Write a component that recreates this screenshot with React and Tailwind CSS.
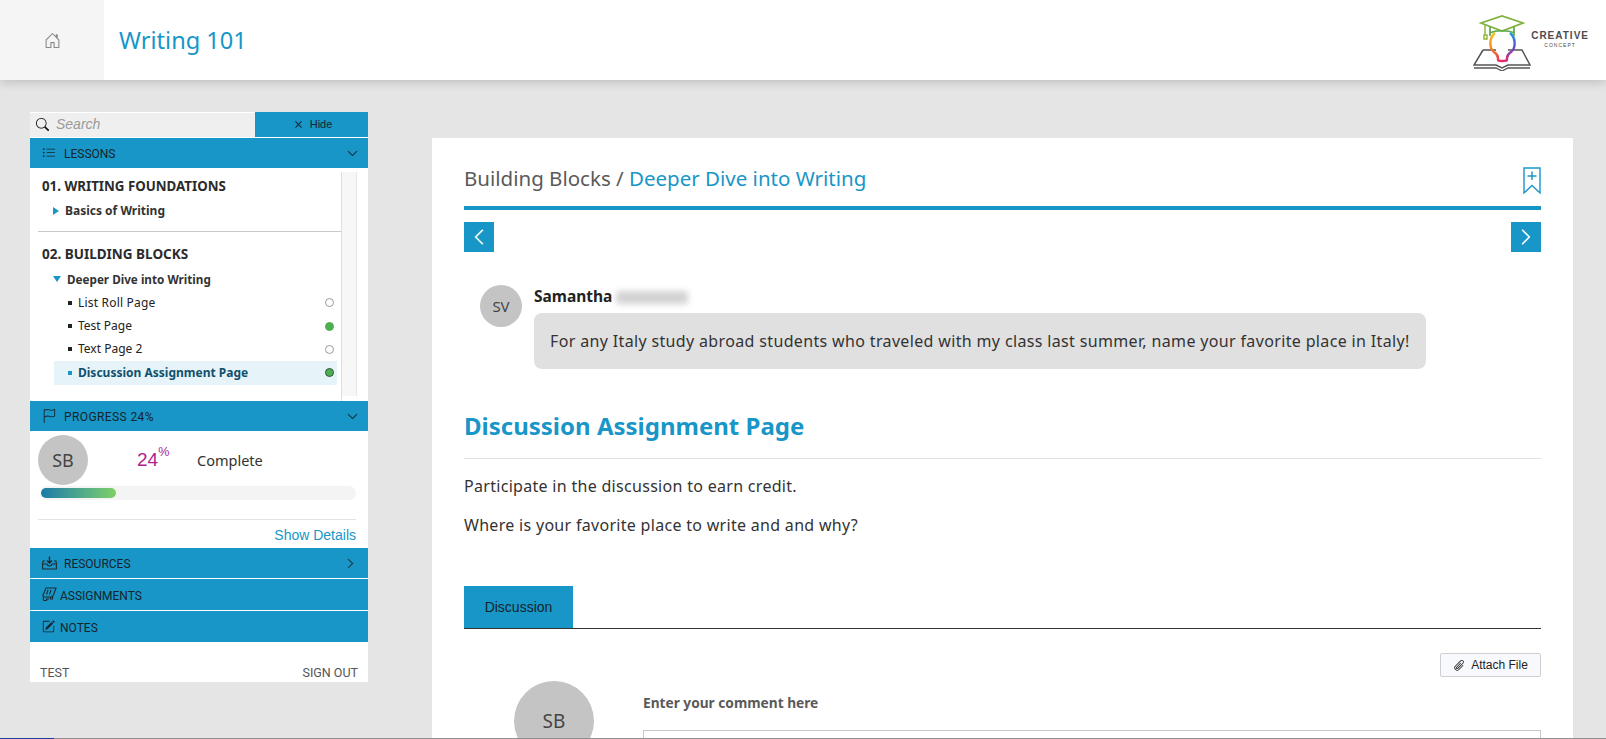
import React from 'react'
import { BsHouseDoor, BsSearch, BsX, BsListUl, BsChevronDown, BsChevronRight, BsChevronLeft, BsFlag, BsPencilSquare, BsPaperclip } from 'react-icons/bs'

const lessonPages = [
    { label: 'List Roll Page', done: false, spacing: 'tracking-[0.2px]' },
    { label: 'Test Page', done: true },
    { label: 'Text Page 2', done: false },
    { label: 'Discussion Assignment Page', done: true, active: true },
]

const Logo = () => (
    <div className="flex items-center mr-[17px]">
        <svg width="58" height="60" viewBox="0 0 58 60" fill="none" className="mt-[2px]">
            <defs>
                <linearGradient id="bulbLeft" x1="0" y1="0" x2="0" y2="1">
                    <stop offset="0" stopColor="#f5c518" />
                    <stop offset="0.5" stopColor="#f58a1f" />
                    <stop offset="1" stopColor="#ee2f5f" />
                </linearGradient>
                <linearGradient id="bulbRight" x1="0" y1="0" x2="0" y2="1">
                    <stop offset="0" stopColor="#1f9ad8" />
                    <stop offset="0.5" stopColor="#5a4fd0" />
                    <stop offset="1" stopColor="#e0296f" />
                </linearGradient>
            </defs>
            <path d="M10 39 H23 M35 39 H49 L57 54 H35 L29 57 L23 54 H1 L10 39" stroke="#555" strokeWidth="1.5" />
            <path d="M1 57 H23 L29 60 L35 57 H57" stroke="#555" strokeWidth="1.3" />
            <path d="M22 22 C16 27 16 37 21 41 C24 43 25 45 25 47 V49 Q25 50 29 50" stroke="url(#bulbLeft)" strokeWidth="2.4" />
            <path d="M37 22 C43 27 43 37 38 41 C35 43 34 45 34 47 V49 Q34 50 29 50" stroke="url(#bulbRight)" strokeWidth="2.4" />
            <path d="M8 12 L29 5 L50 12 L29 20 Z" stroke="#7fb23c" strokeWidth="1.7" fill="#fff" />
            <path d="M17 16 V25 M41 16 V25 M17 22 C23 19 35 19 41 22" stroke="#5ea84a" strokeWidth="1.7" />
            <path d="M12 14 V24 M11 24 h3 v4 h-3 z" stroke="#8fb43a" strokeWidth="1.4" />
        </svg>
        <div className="flex flex-col items-center mt-[-2px] text-[#4d4d4d] font-['Liberation_Sans',sans-serif] leading-none">
            <span className="text-[10px] font-bold tracking-[1px]">CREATIVE</span>
            <span className="text-[5px] tracking-[1px] mt-[2px]">CONCEPT</span>
        </div>
    </div>
)

const ResourcesIcon = () => (
    <svg width="15" height="14" viewBox="0 0 15 14" fill="none" stroke="#1f2a30" strokeWidth="1.1">
        <path d="M3 5 H1 L0.6 8 V13 H14.4 V8 L14 5 H12" />
        <path d="M0.6 8 H5 Q5.5 10 7.5 10 Q9.5 10 10 8 H14.4" />
        <path d="M7.5 0.5 V6.5 M5 4.5 L7.5 7 L10 4.5" strokeWidth="1.4" />
    </svg>
)

const AssignmentsIcon = () => (
    <svg width="15" height="15" viewBox="0 0 15 15" fill="none" stroke="#1f2a30" strokeWidth="1.1">
        <path d="M4 1 H14 L11.5 8 Q10.5 10 8.5 10 H2 Q0.5 10 1 8 Z" />
        <path d="M2 10 Q0.5 12 2 13.5 H4.5 V11.5 M6 10.5 V13 M8.5 10 V12 H10.5 V9" />
        <path d="M6 3 L4.5 7.5 M9 3 L7.5 7.5" />
    </svg>
)

const BarRow = ({ icon, label, right, className = '', labelClass = 'pt-[2px]' }) => (
    <div className={`flex items-center bg-[#1896c8] text-[#16242b] font-['Roboto',sans-serif] text-[12px] pl-[12px] pr-[12px] ${className}`}>
        {icon}
        <span className={labelClass}>{label}</span>
        {right && <span className="ml-auto">{right}</span>}
    </div>
)

const Sidebar = () => (
    <aside className="w-[338px] shrink-0 ml-[30px] mt-[32px] h-[570px] bg-white flex flex-col">
        <div className="flex h-[25px] border-b border-white box-content">
            <div className="flex-1 flex items-center bg-[#efefef] pl-[6px] mt-[1px]">
                <BsSearch className="text-[13px] text-[#111] mb-[2px]" />
                <span className="ml-[7px] italic text-[14px] text-[#9a9a9a] font-['Liberation_Sans',sans-serif] pb-[2px]">Search</span>
            </div>
            <div className="w-[113px] bg-[#1896c8] flex items-center justify-center text-[#16242b] text-[11px] font-['Liberation_Sans',sans-serif]">
                <BsX className="text-[15px] mr-[4px]" />
                Hide
            </div>
        </div>
        <BarRow
            className="h-[30px]"
            labelClass="pt-[1px]"
            icon={<BsListUl className="text-[14px] mr-[8px]" />}
            label="LESSONS"
            right={<BsChevronDown className="text-[11px] stroke-[0.5] mr-[-2px]" />}
        />
        <div className="flex h-[233px]">
            <div className="w-[312px] border-r border-[#dedede] mt-[4px] pl-[8px] font-['Noto_Sans',sans-serif]">
                <div className="pl-[4px] text-[13.3px] font-bold text-[#2b2b2b] mt-[2px] leading-[24px]">01. WRITING FOUNDATIONS</div>
                <div className="flex items-center pl-[15px] text-[12px] font-bold text-[#333] leading-[24px] mt-[1px]">
                    <span className="w-0 h-0 border-y-[4px] border-y-transparent border-l-[6px] border-l-[#1896c8] mr-[6px]" />
                    Basics of Writing
                </div>
                <div className="border-t border-[#c8c8c8] mt-[8px]" />
                <div className="pl-[4px] text-[13.5px] font-bold text-[#2b2b2b] mt-[10px] leading-[24px]">02. BUILDING BLOCKS</div>
                <div className="flex items-center pl-[15px] text-[11.7px] font-bold text-[#333] leading-[24px] mt-[1px]">
                    <span className="w-0 h-0 border-x-[4px] border-x-transparent border-t-[6px] border-t-[#1896c8] mr-[6px]" />
                    Deeper Dive into Writing
                </div>
                <ul className="pl-[16px] pr-[4px]">
                    {lessonPages.map((p) => (
                        <li key={p.label} className={`h-[23.4px] flex items-center pl-[14px] pr-[3px] text-[12px] ${p.active ? 'bg-[#e6f4fa] font-bold text-[#11506e]' : 'text-[#222]'}`}>
                            <span className={`w-[4px] h-[4px] mr-[6px] ${p.active ? 'bg-[#1896c8]' : 'bg-[#222]'}`} />
                            <span className={p.spacing}>{p.label}</span>
                            <span className={`ml-auto w-[9px] h-[9px] rounded-full border ${p.done ? 'bg-[#4fae52]' : 'bg-white border-[#999]'} ${p.active ? 'border-[#2d5a3a]' : p.done ? 'border-[#4fae52]' : ''}`} />
                        </li>
                    ))}
                </ul>
            </div>
            <div className="w-[15px] bg-[#f7f7f7] border-r border-[#e6e6e6] mt-[4px] mb-[5px]" />
        </div>
        <BarRow
            className="h-[30px] tracking-[0.4px]"
            icon={<BsFlag className="text-[14px] mr-[8px]" />}
            label="PROGRESS 24%"
            right={<BsChevronDown className="text-[11px] stroke-[0.5] mr-[-2px]" />}
        />
        <div className="h-[117px] px-[8px] pt-[4px]">
            <div className="flex items-center h-[50px]">
                <div className="w-[50px] h-[50px] rounded-full bg-[#c4c4c4] flex items-center justify-center text-[#444] text-[18px] font-['Noto_Sans',sans-serif]">SB</div>
                <div className="ml-[49px] text-[#b0238f] text-[19px] font-['Liberation_Sans',sans-serif] flex items-start w-[60px]">
                    24<span className="text-[12.5px] mt-[-3px]">%</span>
                </div>
                <span className="text-[14.5px] text-[#333] font-['Noto_Sans',sans-serif] pt-[2px]">Complete</span>
            </div>
            <div className="h-[14px] mt-[1px] ml-[2px] w-[316px] rounded-full bg-[#f4f4f4] relative">
                <div className="absolute left-[1px] top-[2px] h-[10px] w-[75px] rounded-full bg-gradient-to-r from-[#1b7aa5] to-[#7ed061]" />
            </div>
            <div className="border-t border-[#e4e4e4] mt-[19px] w-[318px]" />
            <div className="text-right w-[318px] text-[14px] leading-[30px] text-[#1896c8] font-['Liberation_Sans',sans-serif]">Show Details</div>
        </div>
        <BarRow
            className="h-[30px] mb-[1px]"
            icon={<span className="mr-[7px]"><ResourcesIcon /></span>}
            label="RESOURCES"
            right={<BsChevronRight className="text-[11px] stroke-[0.5]" />}
        />
        <BarRow
            className="h-[31px] mb-[1px]"
            icon={<span className="mr-[3px]"><AssignmentsIcon /></span>}
            label="ASSIGNMENTS"
        />
        <BarRow
            className="h-[31px]"
            icon={<BsPencilSquare className="text-[13px] mr-[5px]" />}
            label="NOTES"
        />
        <div className="mt-auto flex justify-between pl-[10px] pr-[10px] text-[12.5px] leading-[18px] text-[#555] font-['Roboto',sans-serif]">
            <span>TEST</span>
            <span>SIGN OUT</span>
        </div>
    </aside>
)

const Main = () => (
    <main className="w-[1141px] ml-[64px] mt-[58px] bg-white px-[32px] pt-[26px] font-['Noto_Sans',sans-serif]">
        <div className="flex justify-between items-start h-[42px]">
            <h2 className="text-[20.5px] leading-[28px] text-[#5a5a5a]">
                Building Blocks / <span className="text-[#1896c8]">Deeper Dive into Writing</span>
            </h2>
            <svg width="18" height="28" viewBox="0 0 18 28" fill="none" stroke="#1896c8" strokeWidth="1.4" className="mt-[3px]">
                <path d="M1 1 H17 V26 L9 18.5 L1 26 Z" />
                <path d="M9 4.5 V13 M4.5 9 H13.5" />
            </svg>
        </div>
        <div className="h-[4px] bg-[#1896c8]" />
        <div className="flex justify-between mt-[12px]">
            <button className="w-[30px] h-[30px] bg-[#1896c8] flex items-center justify-center text-white text-[18px]"><BsChevronLeft className="stroke-[0.5]" /></button>
            <button className="w-[30px] h-[30px] bg-[#1896c8] flex items-center justify-center text-white text-[18px]"><BsChevronRight className="stroke-[0.5]" /></button>
        </div>
        <div className="flex ml-[16px] mt-[33px]">
            <div className="w-[42px] h-[42px] rounded-full bg-[#c4c4c4] flex items-center justify-center text-[15px] text-[#444]">SV</div>
            <div className="ml-[12px]">
                <div className="flex items-center text-[15.5px] font-bold text-[#222] h-[22px] mt-[1px]">
                    Samantha
                    <span className="ml-[4px] w-[72px] h-[13px] rounded-[3px] bg-[#d2d2d2] blur-[3px]" />
                </div>
                <div className="mt-[5px] h-[56px] w-[892px] rounded-[8px] bg-[#e0e0e0] flex items-center px-[16px] text-[16px] tracking-[0.35px] text-[#333]">
                    For any Italy study abroad students who traveled with my class last summer, name your favorite place in Italy!
                </div>
            </div>
        </div>
        <h1 className="mt-[39px] text-[24px] font-bold leading-[36px] text-[#1896c8] pb-[14px] border-b border-[#e2e2e2]">Discussion Assignment Page</h1>
        <p className="mt-[15px] text-[16px] tracking-[0.3px] leading-[24px] text-[#333]">Participate in the discussion to earn credit.</p>
        <p className="mt-[15px] text-[16px] tracking-[0.3px] leading-[24px] text-[#333]">Where is your favorite place to write and and why?</p>
        <div className="mt-[49px] border-b border-[#333]">
            <div className="w-[109px] h-[42px] bg-[#1896c8] flex items-center justify-center text-[14px] text-[#16242b] font-['Liberation_Sans',sans-serif]">Discussion</div>
        </div>
        <div className="flex justify-end mt-[24px] h-[24px]">
            <button className="w-[101px] h-[24px] bg-[#f8f9fd] border border-[#cfcfcf] rounded-[2px] flex items-center justify-center text-[12px] text-[#222] font-['Liberation_Sans',sans-serif]">
                <BsPaperclip className="text-[13px] mr-[5px] rotate-45" />
                Attach File
            </button>
        </div>
        <div className="flex mt-[4px]">
            <div className="ml-[50px] w-[80px] h-[80px] rounded-full bg-[#c4c4c4] flex items-center justify-center text-[19px] text-[#444] shrink-0">SB</div>
            <div className="ml-[49px] flex-1">
                <div className="mt-[12px] text-[13.7px] font-bold leading-[20px] text-[#5a5a5a]">Enter your comment here</div>
                <div className="mt-[17px] h-[60px] border border-[#c8c8c8]" />
            </div>
        </div>
    </main>
)

export default function App() {
    return (
        <div className="h-[739px] overflow-hidden flex flex-col bg-[#e5e5e5]">
            <header className="h-[80px] shrink-0 bg-white flex items-center shadow-[0_2px_10px_rgba(0,0,0,0.18)] relative z-10">
                <div className="w-[104px] h-full bg-[#f5f5f5] flex items-center justify-center">
                    <BsHouseDoor className="text-[17px] text-[#8a8a8a]" />
                </div>
                <h1 className="ml-[15px] mt-[1px] text-[23.6px] text-[#1896c8] font-['Noto_Sans',sans-serif]">Writing 101</h1>
                <div className="ml-auto"><Logo /></div>
            </header>
            <div className="flex-1 flex overflow-hidden items-start">
                <Sidebar />
                <Main />
            </div>
            <div className="h-px shrink-0 bg-[#8f8f8f] flex">
                <div className="w-[54px] bg-[#1c3f9a]" />
            </div>
        </div>
    )
}
